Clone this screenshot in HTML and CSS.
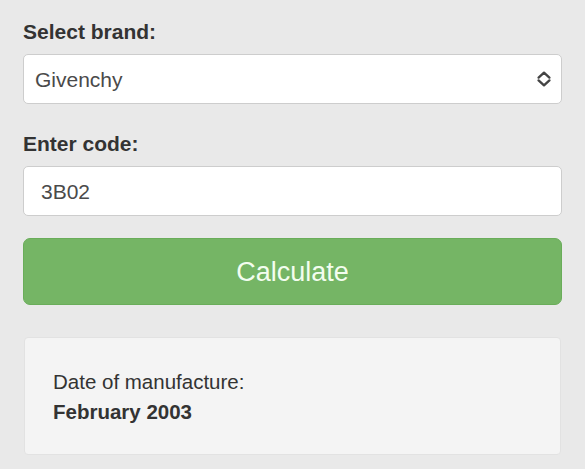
FILE: index.html
```html
<!DOCTYPE html>
<html>
<head>
<meta charset="utf-8">
<link rel="stylesheet" href="styles.css">
</head>
<body>
<main class="page">
  <label class="label">Select brand:</label>
  <div class="field select">
    <span class="value">Givenchy</span>
    <svg class="chevron" width="14" height="16" viewBox="0 0 14 16" aria-hidden="true">
      <path d="M1.6 6.6 L7 1.6 L12.4 6.6 M1.6 9.4 L7 14.4 L12.4 9.4" fill="none" stroke="#444" stroke-width="2.3" stroke-linecap="round" stroke-linejoin="round"/>
    </svg>
  </div>
  <label class="label label-second">Enter code:</label>
  <div class="field input"><span class="value">3B02</span></div>
  <button class="btn">Calculate</button>
  <section class="result">
    <div class="result-line">Date of manufacture:</div>
    <div class="result-line result-strong">February 2003</div>
  </section>
</main>
</body>
</html>
```
FILE: styles.css
```css
html, body {
  margin: 0;
  padding: 0;
  background: #e9e9e9;
}
body {
  font-family: "Liberation Sans", Arial, Helvetica, sans-serif;
  color: #333;
}
.page {
  display: flex;
  flex-direction: column;
  padding: 19px 23px 0 23px;
}
.label {
  display: block;
  font-size: 21px;
  font-weight: bold;
  line-height: 25px;
  color: #333;
  margin-bottom: 10px;
}
.label-second {
  margin-top: 27px;
}
.field {
  box-sizing: border-box;
  height: 50px;
  background: #fff;
  border: 1px solid #cdcdcd;
  border-radius: 5px;
  display: flex;
  align-items: center;
  font-size: 21px;
  color: #4a4a4a;
}
.select {
  justify-content: space-between;
  padding: 0 10px 0 11px;
}
.input {
  padding: 0 17px;
}
.value {
  line-height: 25px;
}
.chevron {
  display: block;
}
.btn {
  box-sizing: border-box;
  margin-top: 22px;
  height: 67px;
  width: 100%;
  background: #75b565;
  border: 1px solid #6aad5a;
  border-radius: 7px;
  color: #f3fdef;
  font-family: "Liberation Sans", Arial, Helvetica, sans-serif;
  font-size: 27px;
  padding: 2px 0 0 0;
}
.result {
  box-sizing: border-box;
  margin: 32px 1px 0 1px;
  height: 118px;
  background: #f4f4f4;
  border: 1px solid #e2e2e2;
  border-radius: 4px;
  padding: 29px 28px 0 28px;
  font-size: 20.5px;
  color: #333;
}
.result-line {
  line-height: 30px;
}
.result-strong {
  font-weight: bold;
}
```
